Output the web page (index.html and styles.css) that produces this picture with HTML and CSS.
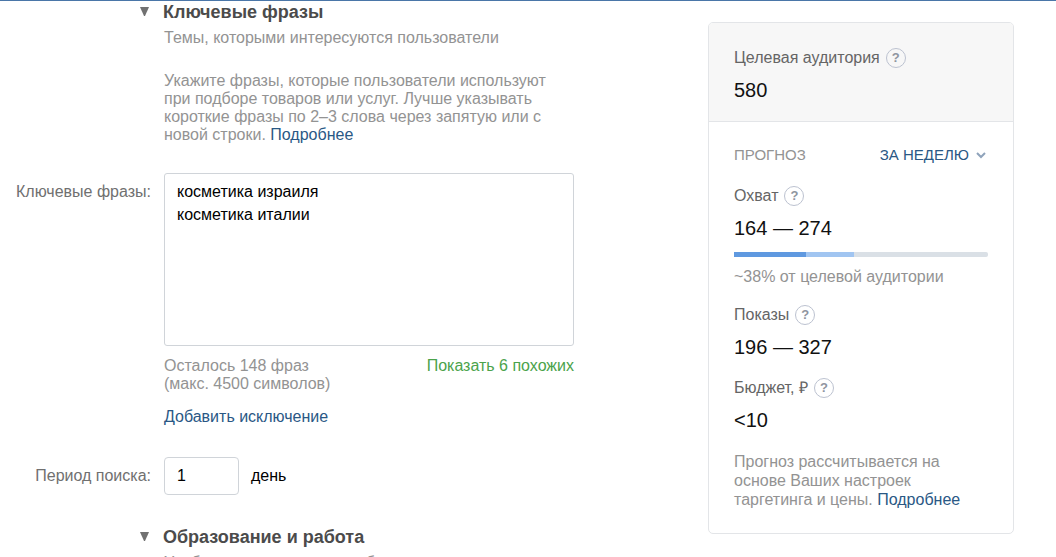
FILE: index.html
```html
<!DOCTYPE html>
<html lang="ru">
<head>
<meta charset="utf-8">
<meta name="viewport" content="width=device-width, initial-scale=1">
<title>Ключевые фразы</title>
<link rel="stylesheet" href="styles.css">
</head>
<body>
<div class="page">
  <main class="form">
    <section class="section">
      <h2 class="section-title"><svg class="marker" viewBox="0 0 10 10" aria-hidden="true"><path d="M0 0h9L5 9H4z"/></svg>Ключевые фразы</h2>
      <p class="section-hint">Темы, которыми интересуются пользователи</p>
      <p class="section-text">Укажите фразы, которые пользователи используют при подборе товаров или услуг. Лучше указывать короткие фразы по 2–3 слова через запятую или с новой строки. <a class="link" href="#">Подробнее</a></p>
      <div class="row row-phrases">
        <label class="label" for="phrases">Ключевые фразы:</label>
        <div class="field">
          <textarea class="phrases" id="phrases">косметика израиля
косметика италии</textarea>
          <div class="below">
            <p class="left-count">Осталось 148 фраз<br>(макс. 4500 символов)</p>
            <a class="link link-similar" href="#">Показать 6 похожих</a>
          </div>
          <a class="link link-exclude" href="#">Добавить исключение</a>
        </div>
      </div>
      <div class="row row-period">
        <label class="label" for="period">Период поиска:</label>
        <div class="period-field">
          <input class="period" id="period" type="text" value="1">
          <span>день</span>
        </div>
      </div>
    </section>
    <section class="section">
      <h2 class="section-title"><svg class="marker" viewBox="0 0 10 10" aria-hidden="true"><path d="M0 0h9L5 9H4z"/></svg>Образование и работа</h2>
      <p class="section-hint">Учебные заведения или работа</p>
    </section>
  </main>
  <aside class="card">
    <div class="card-top">
      <h3 class="stat-name">Целевая аудитория <button class="help" type="button" aria-label="Справка: целевая аудитория">?</button></h3>
      <p class="stat-value">580</p>
    </div>
    <div class="card-body">
      <div class="forecast">
        <span class="forecast-title">ПРОГНОЗ</span>
        <button class="range" type="button">ЗА НЕДЕЛЮ<svg class="chevron" viewBox="0 0 12 8" aria-hidden="true"><path d="M1 2l4 4 4-4"/></svg></button>
      </div>
      <div class="stat">
        <h3 class="stat-name">Охват <button class="help" type="button" aria-label="Справка: охват">?</button></h3>
        <p class="stat-value">164 — 274</p>
        <div class="bar"><span class="bar-low" style="width: 28.3%"></span><span class="bar-high" style="width: 18.9%"></span></div>
        <p class="share">~38% от целевой аудитории</p>
      </div>
      <div class="stat">
        <h3 class="stat-name">Показы <button class="help" type="button" aria-label="Справка: показы">?</button></h3>
        <p class="stat-value">196 — 327</p>
      </div>
      <div class="stat">
        <h3 class="stat-name">Бюджет, ₽ <button class="help" type="button" aria-label="Справка: бюджет">?</button></h3>
        <p class="stat-value">&lt;10</p>
      </div>
      <p class="note">Прогноз рассчитывается на основе Ваших настроек таргетинга и цены. <a class="link" href="#">Подробнее</a></p>
    </div>
  </aside>
</div>
</body>
</html>
```
FILE: styles.css
```css
* {
  box-sizing: border-box;
}

html {
  overflow: hidden;
}

body {
  margin: 0;
  border-top: 1px solid #4a76a8;
  background: #fff;
  color: #000;
  font: 16px/18px "Liberation Sans", Arial, sans-serif;
}

h2, h3, p {
  margin: 0;
}

button, input, textarea {
  font: inherit;
}

.page {
  display: flex;
  align-items: flex-start;
  justify-content: space-between;
  gap: 40px;
  padding-right: 42px;
}

.form {
  flex: 0 1 574px;
}

.section-title {
  display: flex;
  align-items: center;
  gap: 13px;
  padding-left: 140px;
  color: #4b4b4b;
  font-size: 18px;
  line-height: 22px;
}

.marker {
  width: 10px;
  height: 10px;
  fill: #717171;
}

.section-hint, .section-text {
  padding-left: 164px;
  color: #939393;
}

.section-hint {
  margin-top: 6px;
}

.section-text {
  margin-top: 25px;
  padding-right: 16px;
}

.link {
  color: #2a5885;
  text-decoration: none;
}

.row {
  display: grid;
  grid-template-columns: 151px minmax(0, 1fr);
  gap: 13px;
}

.row-phrases {
  margin-top: 29px;
}

.label {
  color: #707070;
  text-align: right;
  white-space: nowrap;
}

.row-phrases .label {
  padding-top: 10px;
}

.phrases {
  display: block;
  width: 100%;
  height: 173px;
  padding: 6px 12px;
  border: 1px solid #d0d4d9;
  border-radius: 3px;
  color: #000;
  line-height: 23px;
  resize: none;
}

.below {
  display: flex;
  justify-content: space-between;
  margin: 11px 0 15px;
}

.left-count {
  color: #939393;
}

.link-similar {
  color: #4ba34b;
}

.row-period {
  align-items: center;
  margin-top: 31px;
}

.period-field {
  display: flex;
  align-items: center;
  gap: 12px;
}

.period {
  width: 75px;
  height: 38px;
  padding: 0 12px;
  border: 1px solid #d0d4d9;
  border-radius: 4px;
}

.section + .section {
  margin-top: 31px;
}

.card {
  flex: 0 0 306px;
  margin-top: 21px;
  border: 1px solid #e3e5e8;
  border-radius: 5px;
}

.card-top {
  padding: 25px 25px 19px;
  border-bottom: 1px solid #e3e5e8;
  border-radius: 4px 4px 0 0;
  background: #f7f7f7;
}

.card-body {
  padding: 24px 25px;
}

.stat-name {
  display: flex;
  align-items: center;
  gap: 6px;
  color: #656565;
  font-size: 16px;
  font-weight: 400;
  line-height: 20px;
}

.help {
  width: 20px;
  height: 20px;
  padding: 0;
  border: 1px solid #bcc2d0;
  border-radius: 50%;
  background: transparent;
  color: #8f959f;
  font-size: 13px;
  font-weight: 700;
  line-height: 18px;
}

.stat-value {
  margin-top: 10px;
  color: #111;
  font-size: 20px;
  line-height: 24px;
}

.forecast {
  display: flex;
  align-items: center;
  justify-content: space-between;
  font-size: 15px;
}

.forecast-title {
  color: #939393;
}

.range {
  display: flex;
  align-items: center;
  gap: 7px;
  padding: 0;
  border: 0;
  background: none;
  color: #2a5885;
}

.chevron {
  width: 12px;
  height: 8px;
  fill: none;
  stroke: #8fa3bb;
  stroke-width: 2;
}

.stat {
  margin-top: 22px;
}

.stat + .stat {
  margin-top: 19px;
}

.bar {
  display: flex;
  height: 5px;
  margin: 12px 0 11px;
  border-radius: 0 2px 2px 0;
  background: #dae0e6;
  overflow: hidden;
}

.bar-low {
  background: #5f99e0;
}

.bar-high {
  background: #a1c5f1;
}

.share, .note {
  color: #939393;
}

.note {
  margin-top: 20px;
  line-height: 19px;
}
```
